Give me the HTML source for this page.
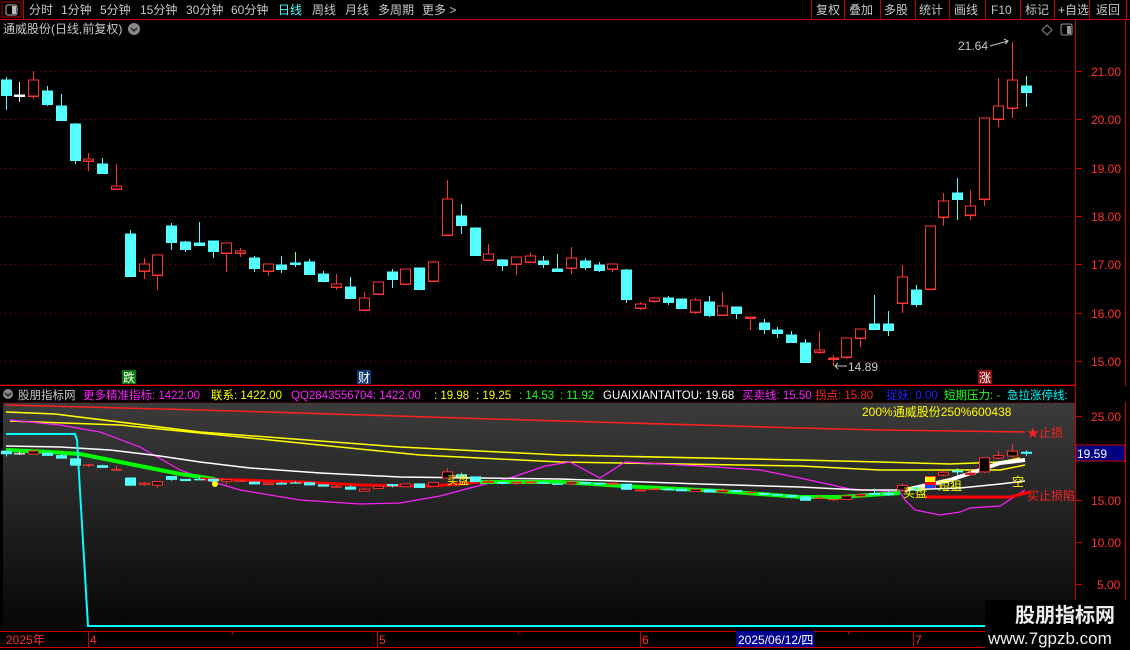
<!DOCTYPE html>
<html><head><meta charset="utf-8"><style>
html,body{margin:0;padding:0;background:#000;width:1130px;height:650px;overflow:hidden}
svg{display:block}
text{font-family:"Liberation Sans","Noto Sans CJK SC",sans-serif;font-size:12px}
.hd text{font-size:11.5px}
.r{stroke:#ff3232;fill:#000}
.c{stroke:#54ffff;fill:#54ffff}
.w{stroke:#fff;fill:#fff}
</style></head><body>
<svg width="1130" height="650" viewBox="0 0 1130 650" xmlns="http://www.w3.org/2000/svg">
<defs>
<linearGradient id="g" x1="0" y1="0" x2="0" y2="1"><stop offset="0" stop-color="#3c3c3c"/><stop offset="1" stop-color="#060606"/></linearGradient>
</defs>
<rect width="1130" height="650" fill="#000"/>
<!-- header -->
<rect x="2" y="2" width="19" height="15" fill="none" stroke="#a00" />
<rect x="6" y="5" width="11" height="10" rx="2" fill="none" stroke="#bbb"/><rect x="12" y="6" width="4" height="8" fill="#bbb"/>
<line x1="0" y1="19.5" x2="1130" y2="19.5" stroke="#c00"/>
<line x1="23.5" y1="0" x2="23.5" y2="19" stroke="#c00"/>
<g fill="#c8c8c8">
<text x="29" y="14">分时</text><text x="61" y="14">1分钟</text><text x="100" y="14">5分钟</text><text x="140" y="14">15分钟</text><text x="186" y="14">30分钟</text><text x="231" y="14">60分钟</text><text x="278" y="14" fill="#54ffff">日线</text><text x="312" y="14">周线</text><text x="345" y="14">月线</text><text x="378" y="14">多周期</text><text x="422" y="14">更多 &gt;</text>
<text x="816" y="14">复权</text><text x="849" y="14">叠加</text><text x="884" y="14">多股</text><text x="919" y="14">统计</text><text x="954" y="14">画线</text><text x="991" y="14">F10</text><text x="1025" y="14">标记</text><text x="1058" y="14">+自选</text><text x="1096" y="14">返回</text>
</g>
<g stroke="#c00"><line x1="811.5" y1="0" x2="811.5" y2="19"/><line x1="844.5" y1="0" x2="844.5" y2="19"/><line x1="880.5" y1="0" x2="880.5" y2="19"/><line x1="915.5" y1="0" x2="915.5" y2="19"/><line x1="949.5" y1="0" x2="949.5" y2="19"/><line x1="985.5" y1="0" x2="985.5" y2="19"/><line x1="1020.5" y1="0" x2="1020.5" y2="19"/><line x1="1054.5" y1="0" x2="1054.5" y2="19"/><line x1="1089.5" y1="0" x2="1089.5" y2="19"/><line x1="1126.5" y1="0" x2="1126.5" y2="19"/></g>
<text x="3" y="33" fill="#c8c8c8">通威股份(日线,前复权)</text>
<circle cx="134" cy="29" r="6" fill="#888"/><path d="M131 28 L134 31 L137 28" stroke="#222" fill="none" stroke-width="1.5"/>
<path d="M1047 25 L1052 30 L1047 35 L1042 30 Z" fill="none" stroke="#888"/>
<rect x="1061" y="24" width="11" height="11" rx="2" fill="none" stroke="#999"/><rect x="1067" y="26" width="4" height="8" fill="#999"/>
<!-- axes -->
<line x1="1075.5" y1="20" x2="1075.5" y2="630" stroke="#c00"/>
<line x1="1125.5" y1="20" x2="1125.5" y2="630" stroke="#c00"/>
<g stroke="#800" stroke-dasharray="1,4">
<line x1="0" y1="71.5" x2="1075" y2="71.5"/><line x1="0" y1="119.5" x2="1075" y2="119.5"/><line x1="0" y1="168.5" x2="1075" y2="168.5"/><line x1="0" y1="216.5" x2="1075" y2="216.5"/><line x1="0" y1="264.5" x2="1075" y2="264.5"/><line x1="0" y1="313.5" x2="1075" y2="313.5"/><line x1="0" y1="361.5" x2="1075" y2="361.5"/>
</g>
<g fill="#ff3232"><text x="1091" y="76">21.00</text><text x="1091" y="124">20.00</text><text x="1091" y="173">19.00</text><text x="1091" y="221">18.00</text><text x="1091" y="269">17.00</text><text x="1091" y="318">16.00</text><text x="1091" y="366">15.00</text></g>
<g stroke="#c00"><line x1="1076" y1="71.5" x2="1082" y2="71.5"/><line x1="1076" y1="119.5" x2="1082" y2="119.5"/><line x1="1076" y1="168.5" x2="1082" y2="168.5"/><line x1="1076" y1="216.5" x2="1082" y2="216.5"/><line x1="1076" y1="264.5" x2="1082" y2="264.5"/><line x1="1076" y1="313.5" x2="1082" y2="313.5"/><line x1="1076" y1="361.5" x2="1082" y2="361.5"/></g>
<!-- candles -->
<g id="k" stroke-width="1"></g>
<g id="kc"></g>
<!-- lower panel -->
<rect x="3" y="402" width="1072" height="228" fill="url(#g)"/>
<g fill="none" stroke-width="1.5">
<polyline stroke="#ff2020" points="6,405 200,410 560,421 800,428 880,430 1025,432"/>
<polyline stroke="#ffff00" points="6,412 55,414 200,432 400,447 560,455 800,460 880,462 950,464 1000,462 1020,458"/>
<polyline stroke="#ffff00" points="10,421 120,425 280,441 420,455 560,462 800,466 880,470 1000,470 1025,465"/>
<polyline stroke="#ff20ff" stroke-width="1.2" points="10,420 60,425 100,432 140,447 180,470 210,481 240,490 300,500 360,504 400,503 440,496 470,488 510,478 545,466 570,462 600,478 625,462 700,466 760,470 800,478 850,489 900,492 905,500 915,510 940,515 960,512 970,508 1000,506 1025,490"/>
<polyline stroke="#ffffff" points="6,446 60,447 110,450 160,456 200,462 250,468 320,473 400,477 480,478 560,479 700,484 800,487 860,490 900,490 960,488 1000,484 1025,481"/>
<polyline stroke="#ffffff" stroke-width="4" points="905,490 950,480 980,470 1000,463 1025,460"/>
<polyline stroke="#00ff00" stroke-width="4" points="6,450 50,452 80,454 120,462 150,468 180,474 215,479"/>
<polyline stroke="#ff0000" stroke-width="3" points="200,479 240,480 300,482 360,485 430,486 460,484 480,482"/>
<polyline stroke="#00ff00" stroke-width="4" points="480,482 560,482 640,487 720,491 800,497 840,497 900,493"/>
<polyline stroke="#ff0000" stroke-width="3" points="925,497 1010,497 1030,492"/>
<polyline stroke="#00ffff" stroke-width="2" points="6,434 75,434 77,440 88,626 985,626"/>
</g>
<use href="#kc" transform="translate(0,437.25) scale(1,0.1739)"/>
<circle cx="215" cy="484" r="3" fill="#ffff00"/>
<rect x="925" y="477" width="10" height="5" fill="#ffff00"/><rect x="925" y="482" width="10" height="3" fill="#ff0000"/><rect x="925" y="485" width="10" height="3" fill="#2040ff"/>
<g fill="#ffff00"><text x="862" y="416">200%通威股份250%600438</text><text x="903" y="497">买盘</text><text x="938" y="490">短狙</text><text x="1012" y="486">空</text><text x="447" y="484" style="font-size:11px">买盘</text></g>
<g fill="#ff2020"><text x="1027" y="437">★止损</text><text x="1027" y="500">买止损陷</text></g>
<g fill="#ff3232"><text x="1091" y="421">25.00</text><text x="1091" y="505">15.00</text><text x="1091" y="547">10.00</text><text x="1097" y="589">5.00</text></g>
<g stroke="#c00"><line x1="1076" y1="416.5" x2="1082" y2="416.5"/><line x1="1076" y1="500.5" x2="1082" y2="500.5"/><line x1="1076" y1="542.5" x2="1082" y2="542.5"/><line x1="1076" y1="584.5" x2="1082" y2="584.5"/></g>
<rect x="1076" y="445" width="49" height="16" fill="#000080" stroke="#c00"/><text x="1077" y="458" fill="#fff">19.59</text>
<!-- upper annotations -->
<text x="958" y="50" fill="#c8c8c8">21.64</text><path d="M990 46 L1008 41 M1004 39 L1008 41 L1005 44" stroke="#c8c8c8" fill="none"/>
<text x="848" y="371" fill="#c8c8c8">14.89</text><path d="M835 366 L847 366 M838 363 L835 366 L838 369" stroke="#c8c8c8" fill="none"/>
<rect x="122" y="370" width="14" height="14" fill="#0a7a0a"/><text x="123" y="382" fill="#fff">跌</text>
<rect x="357" y="370" width="14" height="14" fill="#103a70"/><text x="358" y="382" fill="#fff">财</text>
<rect x="978" y="370" width="14" height="14" fill="#901010"/><text x="979" y="382" fill="#fff">涨</text>
<!-- indicator header -->
<line x1="0" y1="385.5" x2="1075" y2="385.5" stroke="#e00" stroke-width="1.5"/>
<rect x="0" y="386" width="1075" height="16" fill="#000"/>
<circle cx="8" cy="394" r="5" fill="#888"/><path d="M5 393 L8 396 L11 393" stroke="#222" fill="none" stroke-width="1.5"/>
<g class="hd">
<text x="18" y="399" fill="#c8c8c8">股朋指标网</text>
<text x="83" y="399" fill="#ff20ff">更多精准指标: 1422.00</text>
<text x="211" y="399" fill="#ffff00">联系: 1422.00</text>
<text x="291" y="399" fill="#ff20ff">QQ2843556704: 1422.00</text>
<text x="434" y="399" fill="#ffff00">: 19.98</text>
<text x="476" y="399" fill="#ffff00">: 19.25</text>
<text x="519" y="399" fill="#20ff20">: 14.53</text>
<text x="560" y="399" fill="#20ff20">: 11.92</text>
<text x="603" y="399" fill="#fff">GUAIXIANTAITOU: 19.68</text>
<text x="742" y="399" fill="#ff20ff">买卖线: 15.50</text>
<text x="815" y="399" fill="#ff2020">拐点: 15.80</text>
<text x="886" y="399" fill="#2020ff">捉妖: 0.00</text>
<text x="944" y="399" fill="#20ff20">短期压力: -</text>
<text x="1007" y="399" fill="#00ffff">急拉涨停线: </text>
</g>
<rect x="1075" y="386" width="55" height="16" fill="#000"/>
<line x1="1075.5" y1="386" x2="1075.5" y2="402" stroke="#c00"/>
<line x1="0" y1="402.5" x2="1075" y2="402.5" stroke="#300"/>
<!-- time axis -->
<rect x="0" y="631" width="1130" height="19" fill="#000"/>
<line x1="0" y1="631.5" x2="1130" y2="631.5" stroke="#c00"/>
<line x1="0" y1="647.5" x2="1130" y2="647.5" stroke="#c00"/>
<g stroke="#c00"><line x1="88.5" y1="631" x2="88.5" y2="647"/><line x1="377.5" y1="631" x2="377.5" y2="647"/><line x1="640.5" y1="631" x2="640.5" y2="647"/><line x1="913.5" y1="631" x2="913.5" y2="647"/><line x1="232.5" y1="631" x2="232.5" y2="634"/><line x1="518.5" y1="631" x2="518.5" y2="634"/><line x1="848.5" y1="631" x2="848.5" y2="634"/></g>
<g fill="#ff3232"><text x="6" y="644">2025年</text><text x="90" y="644">4</text><text x="379" y="644">5</text><text x="642" y="644">6</text><text x="915" y="644">7</text></g>
<rect x="736" y="631" width="78" height="16" fill="#000090"/><text x="738" y="644" fill="#fff">2025/06/12/四</text>
<!-- watermark -->
<rect x="985" y="600" width="145" height="50" fill="#000"/>
<text x="1015" y="622" fill="#eee" style="font-size:20px;font-weight:bold">股朋指标网</text>
<text x="988" y="644" fill="#eee" style="font-size:17px">www.7gpzb.com</text>
</svg>
<script>
var d=[[6,80,95,77,110,'c'],[19,95,95,82,102,'w'],[33,80,96,71,99,'r'],[47,91,104,86,106,'c'],[61,106,120,94,121,'c'],[75,124,160,123,164,'c'],[88,159,161,153,171,'r'],[102,164,173,158,174,'c'],[116,186,189,164,190,'r'],[130,234,276,230,276,'c'],[144,264,271,258,279,'r'],[157,255,275,255,290,'r'],[171,226,242,223,250,'c'],[185,242,249,241,252,'c'],[199,243,245,222,246,'c'],[213,241,251,241,258,'c'],[226,243,253,243,272,'r'],[240,251,253,248,257,'r'],[254,258,268,256,272,'c'],[268,264,271,264,276,'r'],[281,265,269,256,273,'c'],[295,263,264,252,267,'c'],[309,262,274,259,275,'c'],[323,274,281,271,282,'c'],[336,284,287,274,290,'r'],[350,287,298,277,299,'c'],[364,298,310,292,310,'r'],[378,282,294,282,294,'r'],[392,272,279,269,288,'c'],[405,269,284,269,284,'r'],[419,268,289,268,290,'c'],[433,262,281,261,281,'r'],[447,199,235,180,235,'r'],[461,216,225,204,234,'c'],[475,228,255,228,256,'c'],[488,254,260,244,260,'r'],[502,260,265,259,271,'c'],[516,257,264,257,275,'r'],[530,256,262,253,263,'r'],[543,261,264,256,268,'c'],[557,269,271,254,272,'c'],[571,258,268,247,274,'r'],[585,261,267,258,270,'c'],[599,265,270,262,272,'c'],[612,264,269,264,272,'r'],[626,270,299,269,303,'c'],[640,304,308,302,310,'r'],[654,298,301,297,303,'r'],[668,298,302,296,305,'c'],[681,299,308,299,308,'c'],[695,300,312,298,314,'r'],[709,302,315,296,317,'c'],[722,306,315,292,315,'r'],[736,307,313,307,319,'c'],[750,317,318,317,330,'r'],[764,323,329,319,334,'c'],[777,330,333,327,338,'c'],[791,335,342,331,343,'c'],[805,343,362,339,363,'c'],[819,350,352,331,354,'r'],[833,358,359,355,366,'r'],[846,338,357,338,359,'r'],[860,329,338,329,347,'r'],[874,324,329,295,330,'c'],[888,324,330,311,336,'c'],[902,277,303,265,313,'r'],[916,290,304,285,307,'c'],[930,226,289,226,289,'r'],[943,201,217,193,226,'r'],[957,193,199,178,220,'c'],[970,206,215,190,220,'r'],[984,118,199,118,206,'r'],[998,106,119,78,127,'r'],[1012,80,108,42,118,'r'],[1026,86,92,76,107,'c']];
var s='',s2='';
d.forEach(function(a){var x=a[0],h=Math.max(a[2]-a[1],1);
s+='<line class="'+a[5]+'" x1="'+(x+.5)+'" y1="'+a[3]+'" x2="'+(x+.5)+'" y2="'+a[4]+'"/><rect class="'+a[5]+'" x="'+(x-4.5)+'" y="'+(a[1]+.5)+'" width="10" height="'+h+'"/>';
s2+='<line class="'+a[5]+'" vector-effect="non-scaling-stroke" x1="'+(x+.5)+'" y1="'+a[3]+'" x2="'+(x+.5)+'" y2="'+a[4]+'"/><rect class="'+a[5]+'" vector-effect="non-scaling-stroke" x="'+(x-4.5)+'" y="'+a[1]+'" width="10" height="'+h+'"/>';});
document.getElementById('k').innerHTML=s;
document.getElementById('kc').innerHTML=s2;
</script>
</body></html>
